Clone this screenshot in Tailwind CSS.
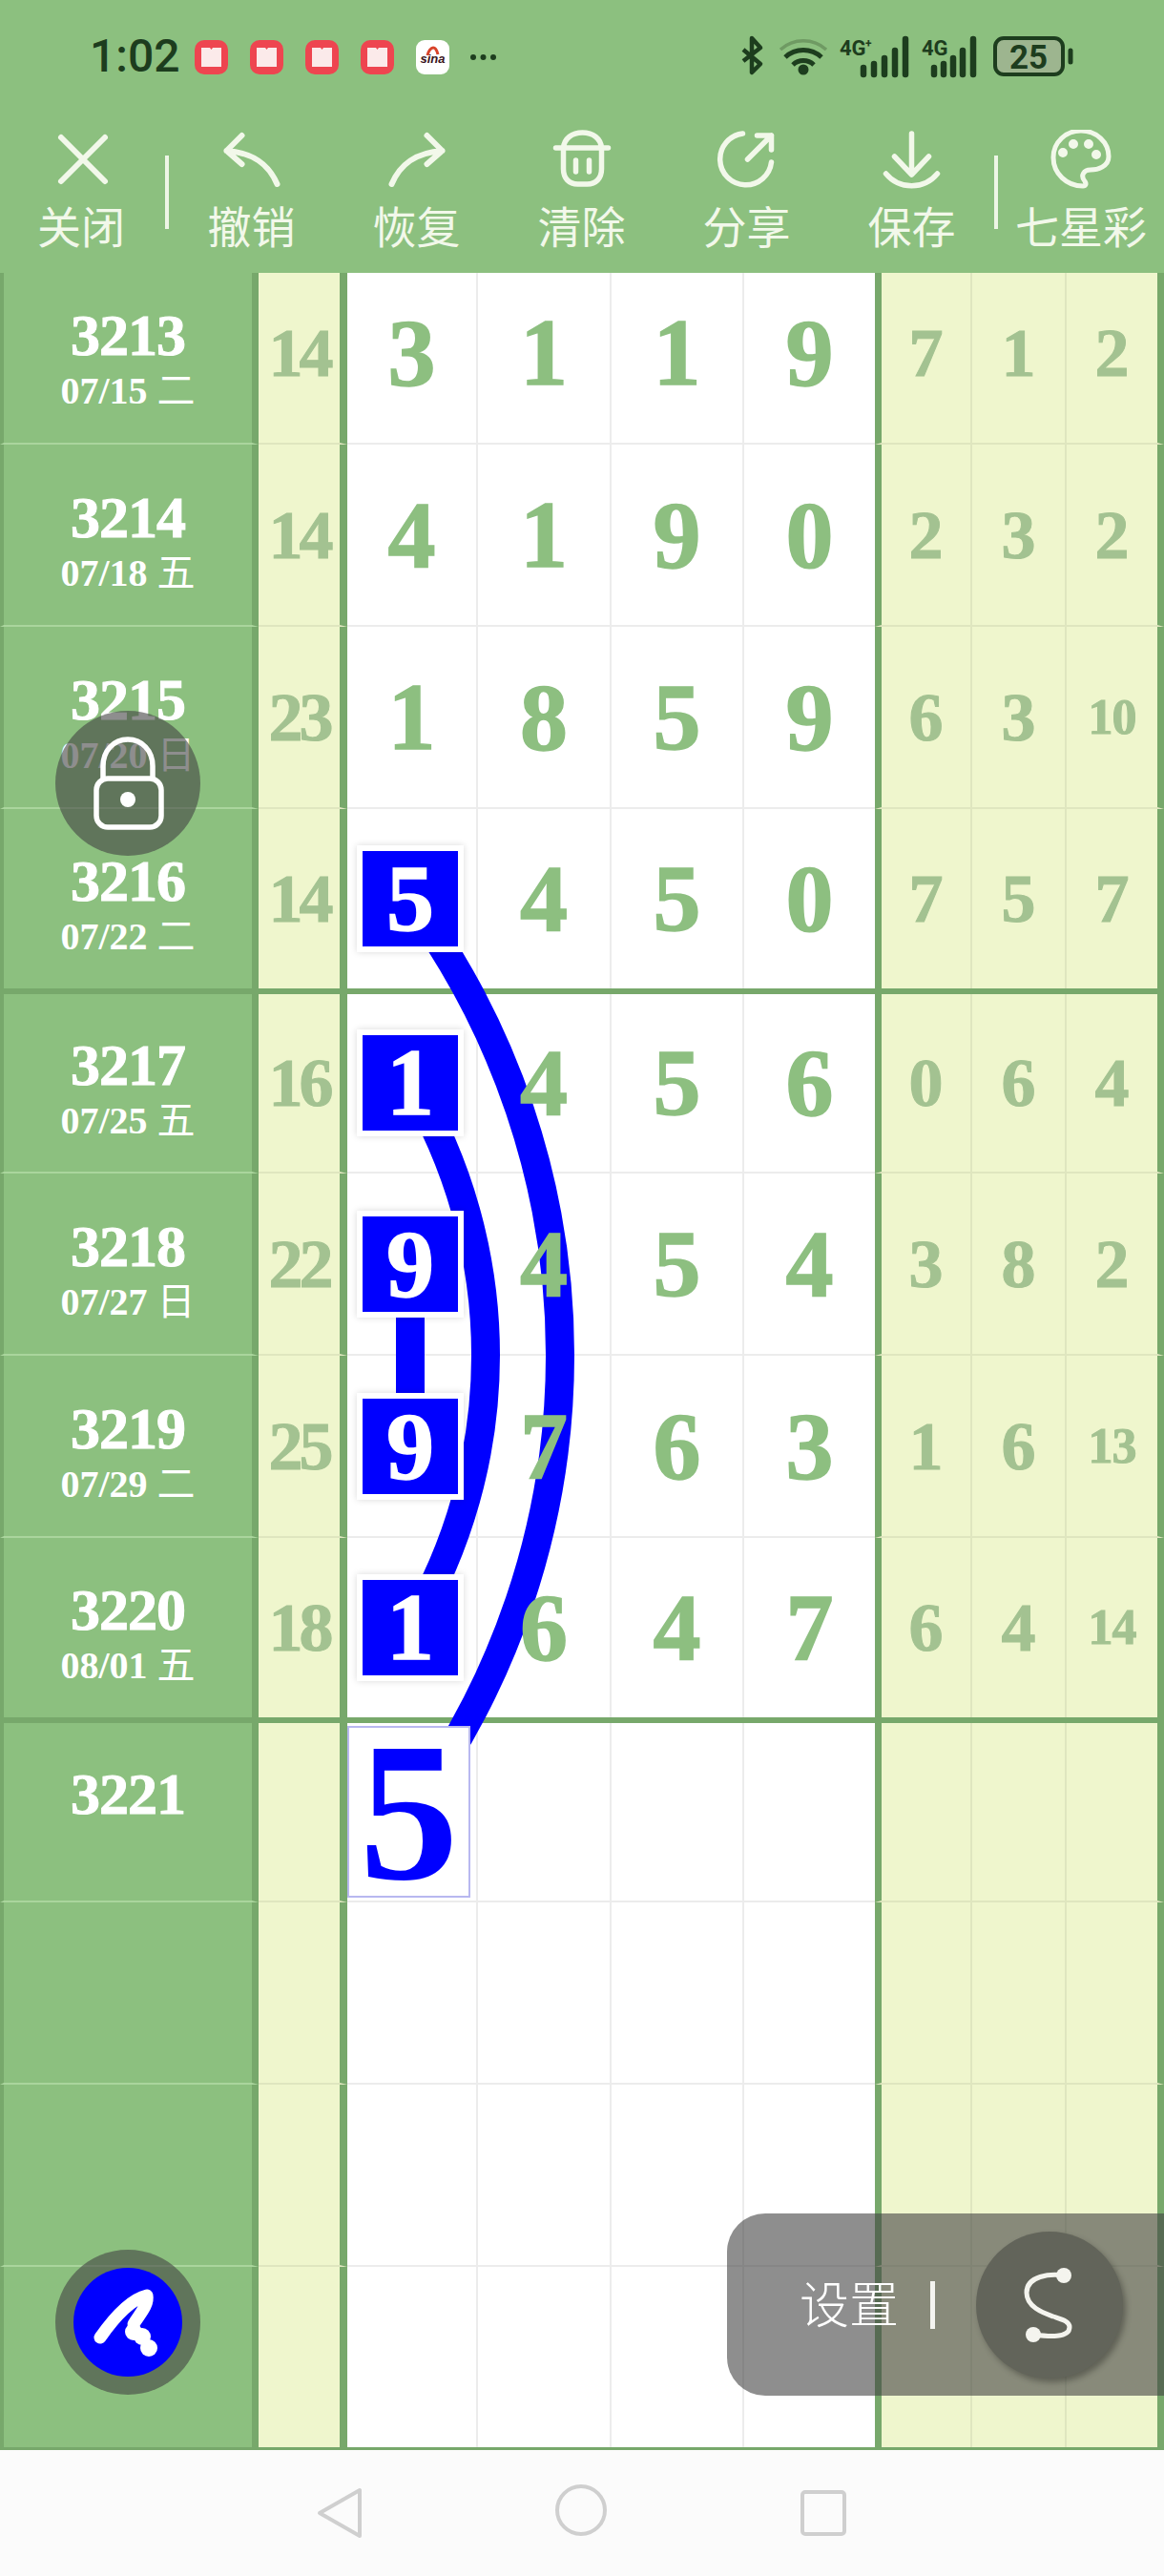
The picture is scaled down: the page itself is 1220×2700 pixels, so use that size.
<!DOCTYPE html>
<html lang="en">
<head>
    <meta charset="UTF-8">
    <meta name="viewport" content="width=device-width, initial-scale=1.0">
    <title>七星彩</title>
    <script src="https://cdn.jsdelivr.net/npm/@tailwindcss/browser@4"></script>
</head>
<body class="bg-[#fbfbfb] font-['Noto_Sans_CJK_SC',sans-serif]">
<div class="relative w-[1220px] h-[2700px] overflow-hidden">

    <!-- Header: status bar + toolbar -->
    <header class="relative z-40 h-[286px] bg-[#8cc07f]">
        <div class="flex h-[136px] pt-[38px] pl-[94px]">
            <span class="w-[93px] h-[42px] font-['Roboto',sans-serif] font-medium text-[48px] leading-[42px] text-[#1d3d1e]">1:02</span>
            <div class="flex gap-[23px] ml-[17px]">
                <svg class="w-[35px] h-[36px] mt-[4px]" viewBox="0 0 35 36"><rect width="35" height="36" rx="10" fill="#ee4550"/><path d="M7 8h9l1.500 2 1.500-2h9v20h-21z" fill="#fbeaea"/></svg>
                <svg class="w-[35px] h-[36px] mt-[4px]" viewBox="0 0 35 36"><rect width="35" height="36" rx="10" fill="#ee4550"/><path d="M7 8h9l1.500 2 1.500-2h9v20h-21z" fill="#fbeaea"/></svg>
                <svg class="w-[35px] h-[36px] mt-[4px]" viewBox="0 0 35 36"><rect width="35" height="36" rx="10" fill="#ee4550"/><path d="M7 8h9l1.500 2 1.500-2h9v20h-21z" fill="#fbeaea"/></svg>
                <svg class="w-[35px] h-[36px] mt-[4px]" viewBox="0 0 35 36"><rect width="35" height="36" rx="10" fill="#ee4550"/><path d="M7 8h9l1.500 2 1.500-2h9v20h-21z" fill="#fbeaea"/></svg>
                <svg class="w-[35px] h-[36px] mt-[4px]" viewBox="0 0 35 36">
                    <rect width="35" height="36" rx="9" fill="#ffffff"/>
                    <path d="M12 16c1-5 4-8 6-8s4 3 5 7" stroke="#d8432a" stroke-width="3" fill="none"/>
                    <text x="17.500" y="24" text-anchor="middle" font-family="Liberation Sans" font-size="13" font-weight="700" font-style="italic" fill="#3a1420">sina</text>
                </svg>
                <svg class="w-[27px] h-[8px] mt-[18px] -ml-[1px]" viewBox="0 0 27 8" fill="#1d3d1e"><circle cx="3" cy="4" r="3"/><circle cx="13.500" cy="4" r="3"/><circle cx="24" cy="4" r="3"/></svg>
            </div>
            <svg class="absolute left-[770px] top-[30px] w-[360px] h-[56px]" viewBox="770 30 360 56" fill="none">
                <!-- bluetooth -->
                <path d="M779 52l18 15-9 9v-36l9 10-18 14" stroke="#1d3d1e" stroke-width="4.500" stroke-linejoin="round"/>
                <!-- wifi -->
                <path d="M818 52a36 36 0 0 1 48 0" stroke="#6f9a63" stroke-width="3.500"/>
                <path d="M823 60a28 28 0 0 1 38 0M831 68a16 16 0 0 1 22 0" stroke="#1d3d1e" stroke-width="5"/>
                <circle cx="842" cy="73" r="5.500" fill="#1d3d1e"/>
                <!-- sim 1 -->
                <text x="880" y="58" font-family="Roboto" font-size="22" font-weight="700" fill="#1d3d1e">4G</text>
                <text x="907" y="50" font-family="Roboto" font-size="12" font-weight="700" fill="#1d3d1e">+</text>
                <path d="M905 71v7M916 67v11M927 61v17M938 53v25M949 41v37" stroke="#1d3d1e" stroke-width="6.500" stroke-linecap="round"/>
                <!-- sim 2 -->
                <text x="966" y="58" font-family="Roboto" font-size="22" font-weight="700" fill="#1d3d1e">4G</text>
                <path d="M979 71v7M989 67v11M999 61v17M1009 53v25M1020 41v37" stroke="#1d3d1e" stroke-width="6.500" stroke-linecap="round"/>
                <!-- battery -->
                <rect x="1043" y="40" width="71" height="38" rx="9" fill="#9db58f" stroke="#1d3d1e" stroke-width="4"/>
                <text x="1078" y="72" text-anchor="middle" font-family="Roboto" font-size="35" font-weight="700" fill="#1d3d1e">25</text>
                <path d="M1122 53v12" stroke="#1d3d1e" stroke-width="5" stroke-linecap="round"/>
            </svg>
        </div>

        <nav class="flex text-[46px] leading-none text-[#f2f8ea]">
            <div class="flex flex-col items-center w-[173px] pr-[3px]">
                <svg class="w-[64px] h-[64px]" viewBox="53 136 64 64" fill="none" stroke="currentColor" stroke-width="6" stroke-linecap="round"><path d="M64 144l46 46M110 144l-46 46"/></svg>
                <span class="mt-[12px]">关闭</span>
            </div>
            <div class="w-[4px] h-[77px] mt-[27px] bg-[#eef6e6]"></div>
            <div class="flex flex-col items-center w-[173px]">
                <svg class="w-[64px] h-[64px]" viewBox="231.500 136 64 64" fill="none" stroke="currentColor" stroke-width="6" stroke-linecap="round" stroke-linejoin="round"><path d="M253 142l-16 16 16 14M237 158c28 2 44 14 53 35"/></svg>
                <span class="mt-[12px]">撤销</span>
            </div>
            <div class="flex flex-col items-center w-[173px]">
                <svg class="w-[64px] h-[64px]" viewBox="404.500 136 64 64" fill="none" stroke="currentColor" stroke-width="6" stroke-linecap="round" stroke-linejoin="round"><path d="M447 142l16 16-16 14M463 158c-28 2-44 14-53 35"/></svg>
                <span class="mt-[12px]">恢复</span>
            </div>
            <div class="flex flex-col items-center w-[173px]">
                <svg class="w-[64px] h-[64px]" viewBox="577.500 136 64 64" fill="none" stroke="currentColor" stroke-width="5.500" stroke-linecap="round" stroke-linejoin="round"><path d="M582 155h55M590 155c1-10 9-16 20-16s19 6 20 16M590 155v22c0 10 6 16 15 16h10c9 0 15-6 15-16v-22M603 168v12M617 168v12"/></svg>
                <span class="mt-[12px]">清除</span>
            </div>
            <div class="flex flex-col items-center w-[173px]">
                <svg class="w-[64px] h-[64px]" viewBox="750.500 136 64 64" fill="none" stroke="currentColor" stroke-width="5.500" stroke-linecap="round" stroke-linejoin="round"><path d="M778 140a27 27 0 1 0 30 30M783 167l25-25M793 142h15v15"/></svg>
                <span class="mt-[12px]">分享</span>
            </div>
            <div class="flex flex-col items-center w-[173px]">
                <svg class="w-[64px] h-[64px]" viewBox="923.500 136 64 64" fill="none" stroke="currentColor" stroke-width="5.500" stroke-linecap="round" stroke-linejoin="round"><path d="M955 140v43M937 164l18 19 18-19M928 182c14 17 40 17 54 0"/></svg>
                <span class="mt-[12px]">保存</span>
            </div>
            <div class="w-[4px] h-[77px] mt-[27px] bg-[#eef6e6]"></div>
            <div class="flex flex-col items-center w-[174px]">
                <svg class="w-[64px] h-[64px]" viewBox="1101 136 64 64" fill="none" stroke="currentColor" stroke-width="5" stroke-linecap="round" stroke-linejoin="round">
                    <path d="M1135 195c-17 0-31-13-31-30 0-16 13-28 29-28s29 12 29 27c0 11-12 14-19 14s-11 6-6 12c2 3 1 5-2 5z"/>
                    <circle cx="1114" cy="160" r="2.500" fill="currentColor"/><circle cx="1125" cy="151" r="2.500" fill="currentColor"/><circle cx="1141" cy="151" r="2.500" fill="currentColor"/><circle cx="1149" cy="162" r="2.500" fill="currentColor"/>
                </svg>
                <span class="mt-[12px]">七星彩</span>
            </div>
        </nav>
    </header>

    <!-- Chart: the first row is scrolled 11px under the header -->
    <main class="h-[2282px] overflow-hidden border-b-[3px] border-[#77a86b]">
        <div id="chart" class="relative -mt-[11px] font-['Liberation_Serif','Noto_Sans_CJK_SC',serif] font-bold">
            <svg class="absolute left-0 top-0 z-10 w-[1220px] h-[2292px]" viewBox="0 275 1220 2292" fill="none" stroke="#0000ff" stroke-width="30">
                <path d="M430 943A804.600 804.600 0 0 1 430 1898"/>
                <path d="M430 1134A559 559 0 0 1 430 1707"/>
                <path d="M430 1325V1516"/>
            </svg>
        </div>
    </main>

    <!-- Floating buttons on the left -->
    <div class="absolute left-[58px] top-[745px] z-30 w-[152px] h-[152px] rounded-full bg-[#424242]/60 flex items-center justify-center">
        <svg class="w-[152px] h-[152px]" viewBox="58 745 152 152" fill="none" stroke="#ffffff" stroke-width="5.500">
            <rect x="101" y="816" width="68" height="51" rx="12"/>
            <path d="M108 816v-13c0-16 11-28 26-28s26 12 26 28v13"/>
            <circle cx="134" cy="838" r="8" fill="#ffffff" stroke="none"/>
        </svg>
    </div>
    <div class="absolute left-[58px] top-[2358px] z-30 w-[152px] h-[152px] rounded-full bg-[#424242]/60 flex items-center justify-center">
        <svg class="w-[114px] h-[114px]" viewBox="77 2377 114 114">
            <circle cx="134" cy="2434" r="57" fill="#0000ff"/>
            <path d="M105 2450c14-20 32-40 49-44 2 10-8 20-14 30" fill="none" stroke="#ffffff" stroke-width="13" stroke-linecap="round" stroke-linejoin="round"/>
            <g fill="#ffffff"><circle cx="140" cy="2444" r="9"/><circle cx="149" cy="2449" r="9"/><circle cx="156" cy="2461" r="9"/></g>
        </svg>
    </div>

    <!-- Settings pill -->
    <div class="absolute left-[762px] top-[2320px] z-30 w-[458px] h-[191px] rounded-l-[40px] bg-[#424242]/60 flex items-center text-white">
        <span class="ml-[76px] mb-[5px] text-[52px] font-light leading-none">设置</span>
        <div class="w-[5px] h-[50px] ml-[33px] bg-[#f4f4f0]"></div>
        <div class="w-[154px] h-[154px] ml-[43px] rounded-full bg-[#62645a] shadow-[3px_4px_6px_rgba(0,0,0,0.3)]">
            <svg class="w-[154px] h-[154px]" viewBox="1022 2338 154 154" fill="none" stroke="#f4f4ee" stroke-width="5" stroke-linecap="round">
                <path d="M1114 2384C1100 2382 1075 2384 1075 2402C1075 2418 1095 2424 1103 2427C1112 2430 1120 2432 1120 2438C1120 2450 1098 2448 1082 2446"/>
                <circle cx="1114" cy="2384" r="8" fill="#f4f4ee" stroke="none"/>
                <circle cx="1082" cy="2446" r="8" fill="#f4f4ee" stroke="none"/>
            </svg>
        </div>
    </div>

    <!-- Navigation bar -->
    <footer class="relative h-[132px] flex">
        <svg class="w-[1220px] h-[132px]" viewBox="0 2568 1220 132" fill="none" stroke="#cfcfcf" stroke-width="4" stroke-linejoin="round">
            <path d="M377 2610v48l-42-24z"/>
            <circle cx="609" cy="2631" r="25"/>
            <rect x="841" y="2612" width="44" height="44" rx="3"/>
        </svg>
    </footer>
</div>

<script>
    // issue, date, weekday, sum, four main digits, three right digits
    const rows = [
        ['3213', '07/15', '二', '14', ['3', '1', '1', '9'], ['7', '1', '2']],
        ['3214', '07/18', '五', '14', ['4', '1', '9', '0'], ['2', '3', '2']],
        ['3215', '07/20', '日', '23', ['1', '8', '5', '9'], ['6', '3', '10']],
        ['3216', '07/22', '二', '14', ['5', '4', '5', '0'], ['7', '5', '7']],
        ['3217', '07/25', '五', '16', ['1', '4', '5', '6'], ['0', '6', '4']],
        ['3218', '07/27', '日', '22', ['9', '4', '5', '4'], ['3', '8', '2']],
        ['3219', '07/29', '二', '25', ['9', '7', '6', '3'], ['1', '6', '13']],
        ['3220', '08/01', '五', '18', ['1', '6', '4', '7'], ['6', '4', '14']],
        ['3221', '', '', '', ['', '', '', ''], ['', '', '']],
        ['', '', '', '', ['', '', '', ''], ['', '', '']],
        ['', '', '', '', ['', '', '', ''], ['', '', '']],
        ['', '', '', '', ['', '', '', ''], ['', '', '']]
    ];

    // rows whose first main digit is drawn as a blue box
    const boxed = [3, 4, 5, 6, 7];
    const mainBorders = ['border-r-2', 'border-r-2', 'border-r-2', ''];
    const rightCells = [
        'border-l-[7px] border-r-2 border-r-[#dfe6bf] border-l-[#77a86b]',
        'border-r-2 border-r-[#dfe6bf]',
        'border-r-[7px] border-r-[#77a86b]'
    ];

    function mainCell(digit, col, rowIndex, line) {
        let inner = `<span class="relative z-20 text-[100px] leading-none text-[#8dbf80] [-webkit-text-stroke:1.5px_#8dbf80]">${digit}</span>`;
        if (col === 0 && boxed.includes(rowIndex)) {
            inner = `<span class="relative z-20 flex items-center justify-center w-[112px] h-[112px] mr-[3px] border-[6px] border-white bg-[#0000ff] bg-clip-padding text-[100px] leading-none text-white [-webkit-text-stroke:1.5px_#ffffff] shadow-[0_0_7px_rgba(0,0,0,0.15)]">${digit}</span>`;
        }
        if (col === 0 && rowIndex === 8) {
            inner = `<span class="relative z-20 flex items-center justify-center w-[129px] h-[180px] mr-[6px] border-[2px] border-[#b8b8f0] bg-white text-[208px] leading-none text-[#0000ff]">5</span>`;
        }
        return `<div class="flex items-center justify-center bg-white border-[#ececec] ${mainBorders[col]} ${line}">${inner}</div>`;
    }

    function renderRow(row, i) {
        const [issue, date, weekday, sum, main, right] = row;
        // thick green rule sits below the 3216 and 3220 rows
        const thickBelow = i === 3 || i === 7;
        const thickAbove = i === 4 || i === 8;
        const rowClass = thickBelow ? 'border-b-[3px] border-[#77a86b]' : thickAbove ? 'border-t-[3px] border-[#77a86b]' : '';
        const line = thickBelow ? '' : 'border-b-2';

        const rightHtml = right.map((d, c) => {
            const size = d.length > 1 ? 'text-[52px] tracking-[-1px]' : 'text-[72px]';
            return `<div class="flex items-center justify-center bg-[#eff6cd] border-b-[#dfe6bf] ${rightCells[c]} ${line}"><span class="relative z-20 ${size} leading-none text-[#a3c291] [-webkit-text-stroke:1px_#a3c291]">${d}</span></div>`;
        }).join('');

        return `<div class="box-border grid grid-cols-[271px_93px_137px_140px_139px_137px_102px_99px_102px] h-[191px] ${rowClass}">
            <div class="flex flex-col items-center justify-center pt-[10px] bg-[#8cc07f] text-white border-l-4 border-r-[7px] border-l-[#77a86b] border-r-[#77a86b] border-b-[#aad59d] ${line}">
                <span class="h-[62px] text-[62px] leading-none tracking-[-1px] [-webkit-text-stroke:1px_#ffffff]">${issue}</span>
                <span class="h-[40px] mt-[8px] text-[40px] leading-none">${date} <span class="font-normal">${weekday}</span></span>
            </div>
            <div class="flex items-center justify-center bg-[#eff6cd] border-r-8 border-r-[#77a86b] border-b-[#dfe6bf] ${line}"><span class="relative z-20 text-[72px] leading-none tracking-[-4px] text-[#a3c291] [-webkit-text-stroke:1px_#a3c291]">${sum}</span></div>
            ${main.map((d, c) => mainCell(d, c, i, line)).join('')}
            ${rightHtml}
        </div>`;
    }

    document.getElementById('chart').insertAdjacentHTML('beforeend', rows.map(renderRow).join(''));
</script>
</body>
</html>
